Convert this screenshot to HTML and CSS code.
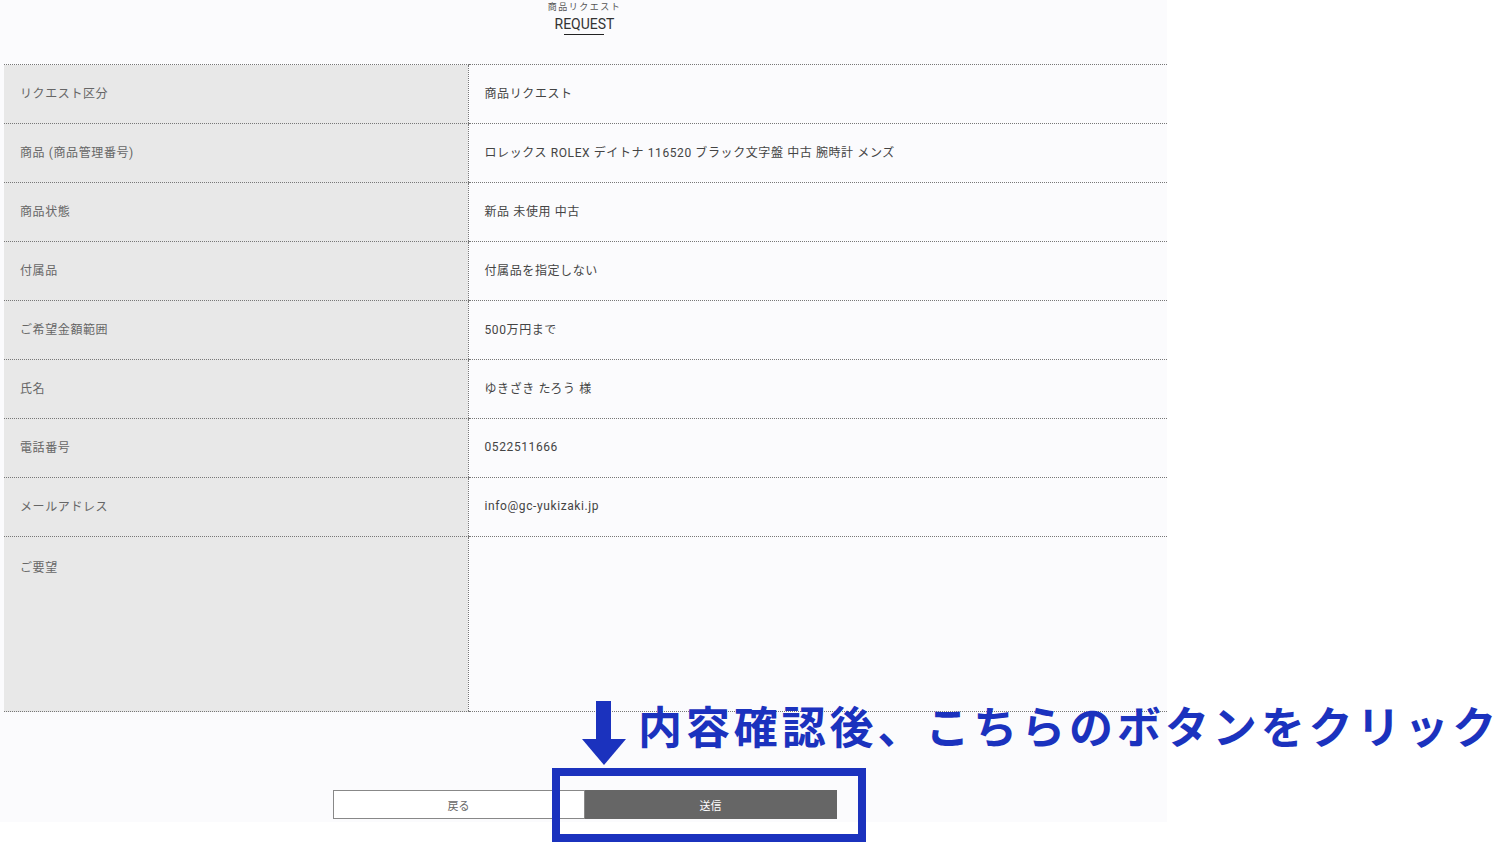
FILE: index.html
```html
<!DOCTYPE html>
<html lang="ja">
	<head>
		<meta charset="UTF-8">
		<meta name="viewport" content="width=device-width, initial-scale=1.0">
		<title>商品リクエスト 確認</title>
		<link rel="stylesheet" href="styles.css">
	</head>
	<body>

		<div class="page">

			<div class="page-head">
				<p class="head-sub">商品リクエスト</p>
				<h1 class="head-title">REQUEST</h1>
			</div>

			<table class="confirm">
				<tr>
					<th>リクエスト区分</th>
					<td>商品リクエスト</td>
				</tr>
				<tr>
					<th>商品 (商品管理番号)</th>
					<td>ロレックス ROLEX デイトナ 116520 ブラック文字盤 中古 腕時計 メンズ</td>
				</tr>
				<tr>
					<th>商品状態</th>
					<td>新品 未使用 中古</td>
				</tr>
				<tr>
					<th>付属品</th>
					<td>付属品を指定しない</td>
				</tr>
				<tr>
					<th>ご希望金額範囲</th>
					<td>500万円まで</td>
				</tr>
				<tr>
					<th>氏名</th>
					<td>ゆきざき たろう 様</td>
				</tr>
				<tr>
					<th>電話番号</th>
					<td>0522511666</td>
				</tr>
				<tr>
					<th>メールアドレス</th>
					<td>info@gc-yukizaki.jp</td>
				</tr>
				<tr class="tall">
					<th>ご要望</th>
					<td></td>
				</tr>
			</table>

			<div class="actions">
				<button class="btn btn-back">戻る</button>
				<button class="btn btn-send">送信</button>
			</div>

		</div>

		<!-- annotation over the screenshot -->
		<div class="note">
			<svg class="note-arrow" width="44" height="64" viewBox="0 0 44 64">
				<rect x="14" y="0" width="15" height="40" fill="#1b32be"/>
				<polygon points="0,38 44,38 22,64" fill="#1b32be"/>
			</svg>
			<span class="note-text">内容確認後、こちらのボタンをクリック</span>
		</div>
		<div class="note-box"></div>

	</body>
</html>
```

FILE: styles.css
```css
body {
	margin: 0;
	background-color: #ffffff;
	font-family: Roboto, "Noto Sans CJK JP", sans-serif;
	width: 1500px;
	height: 842px;
	overflow: hidden;
	position: relative;
}
.page {
	width: 1167px;
	height: 822px;
	background-color: #fbfbfd;
}
.page-head {
	height: 64px;
	text-align: center;
	padding-left: 2px;
	box-sizing: border-box;
}
.head-sub {
	margin: 0;
	padding-top: 1px;
	font-size: 9px;
	line-height: 12px;
	letter-spacing: 1.5px;
	color: #555;
}
.head-title {
	display: inline-block;
	margin: 2px 0 0;
	font-size: 14px;
	font-weight: normal;
	line-height: 18px;
	color: #333;
}
.head-title::after {
	content: "";
	display: block;
	width: 40px;
	height: 1px;
	margin: 1px auto 0;
	background-color: #222;
}
.confirm {
	margin-left: 4px;
	width: 1163px;
	border-collapse: collapse;
}
.confirm th,
.confirm td {
	height: 59px;
	padding: 0 16px 3px;
	border-top: 1px dotted #777;
	border-bottom: 1px dotted #777;
	font-size: 12px;
	font-weight: normal;
	text-align: left;
	vertical-align: middle;
	box-sizing: border-box;
}
.confirm th {
	width: 464px;
	background-color: #e8e8e8;
	color: #666;
	letter-spacing: 0.6px;
}
.confirm td {
	border-left: 1px dotted #777;
	color: #444;
	letter-spacing: 0.6px;
}
.confirm .tall th,
.confirm .tall td {
	height: 175px;
	vertical-align: top;
	padding-top: 21px;
}
.actions {
	display: flex;
	justify-content: center;
	margin-top: 78px;
	padding-left: 2px;
}
.btn {
	width: 252px;
	height: 29px;
	font-family: "Noto Sans CJK JP", sans-serif;
	font-size: 11px;
	border-radius: 0;
	margin: 0;
	cursor: pointer;
}
.btn-back {
	background-color: #ffffff;
	border: 1px solid #888;
	color: #666;
}
.btn-send {
	background-color: #666666;
	border: 1px solid #666666;
	color: #ffffff;
}
.note {
	position: absolute;
	left: 582px;
	top: 701px;
	display: flex;
	align-items: flex-start;
	gap: 12px;
}
.note-text {
	margin-top: -4px;
	font-family: "Noto Sans CJK JP", sans-serif;
	font-size: 44px;
	font-weight: bold;
	line-height: 56px;
	letter-spacing: 3.9px;
	color: #1b32be;
	white-space: nowrap;
}
.note-box {
	position: absolute;
	left: 552px;
	top: 768px;
	width: 314px;
	height: 74px;
	border: 8px solid #1b32be;
	box-sizing: border-box;
}
```
